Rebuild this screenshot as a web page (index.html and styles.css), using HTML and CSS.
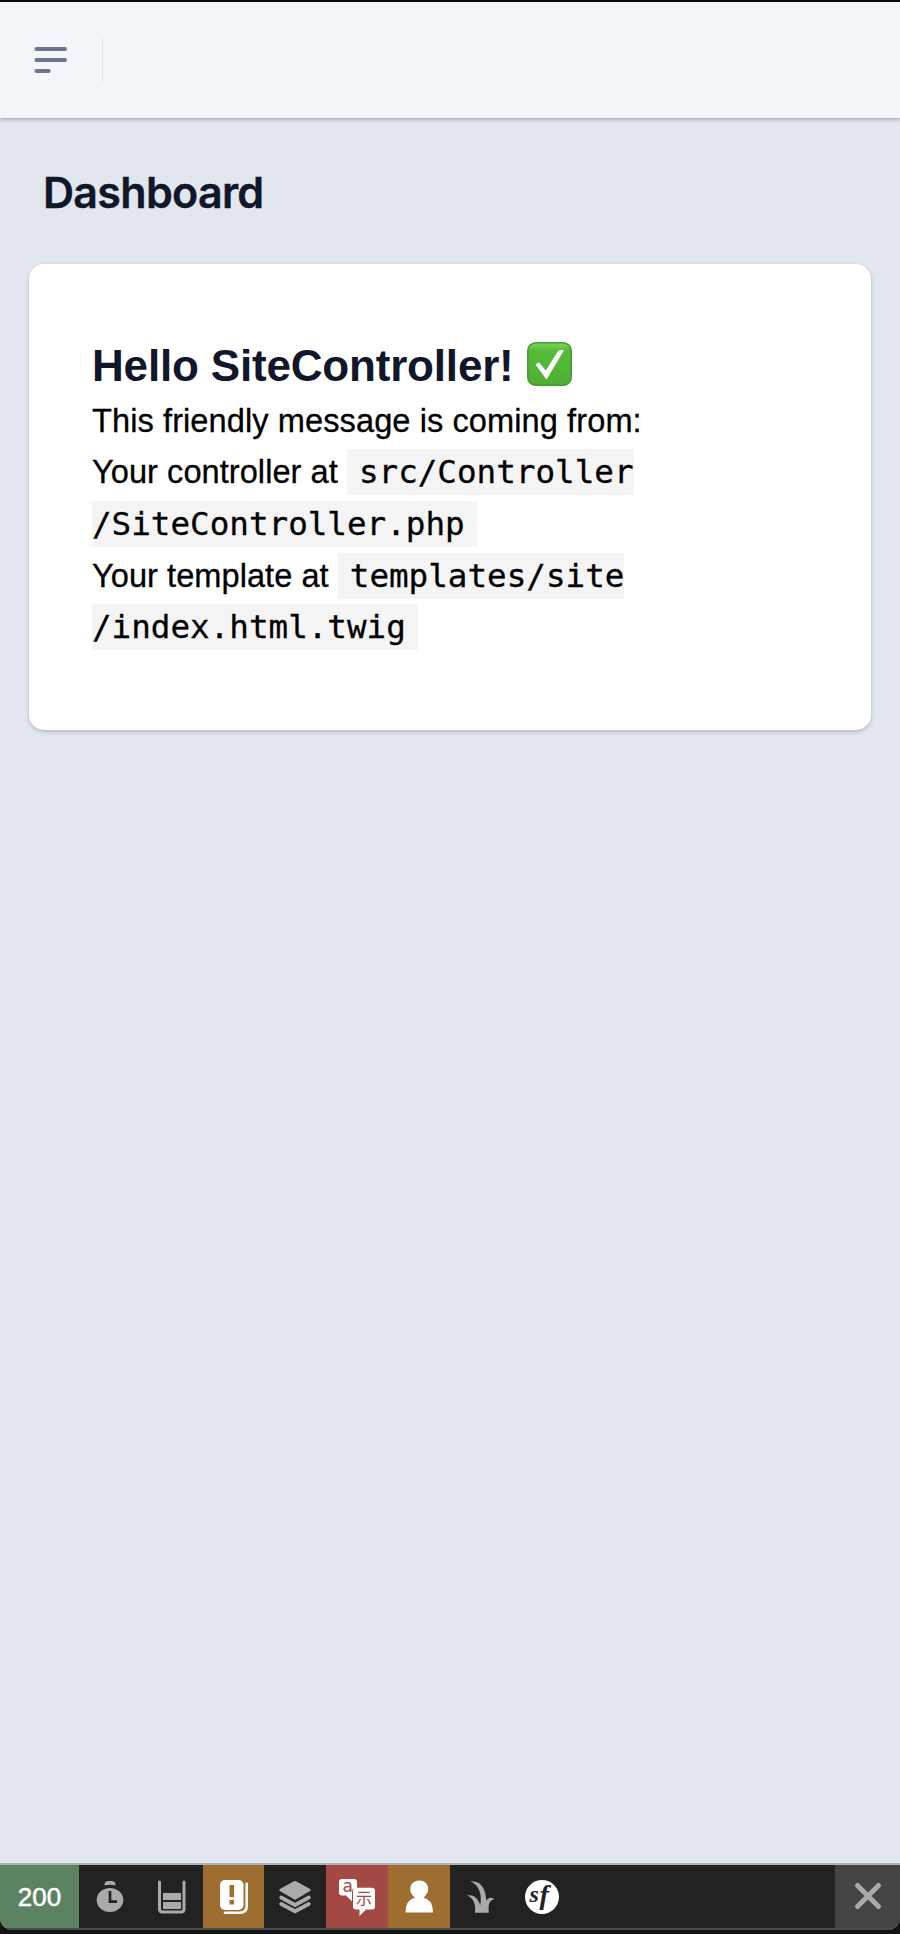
FILE: index.html
```
<!DOCTYPE html>
<html lang="en">
<head>
<meta charset="utf-8">
<title>Dashboard</title>
<link rel="stylesheet" href="styles.css">
</head>
<body>
<div class="app">
  <header class="topbar">
    <svg class="menu" width="34" height="28" viewBox="0 0 34 28"><path d="M2.500 3H31M2.500 14H31M2.500 25H14.700" stroke="#69768e" stroke-width="4" stroke-linecap="round"/></svg>
    <span class="divider"></span>
  </header>
  <main class="main">
    <h1 class="title">Dashboard</h1>
    <section class="card">
      <h2 class="hello"><span>Hello SiteController!</span>
        <svg class="check" width="45" height="44" viewBox="0 0 45 44"><defs><linearGradient id="g" x2="0" y2="1"><stop offset="0" stop-color="#7fd45c"/><stop offset=".18" stop-color="#55bd3a"/><stop offset="1" stop-color="#4fae34"/></linearGradient></defs><rect x=".8" y=".8" width="43.4" height="42.4" rx="8" fill="url(#g)" stroke="#459c31" stroke-width="1.6"/><path d="M8.500 22.500L12 20.300L18.800 28.600L31 9Q34 7.700 37 8.300L19.500 37.500Z" fill="#fff"/></svg>
      </h2>
      <p class="line msg">This friendly message is coming from:</p>
      <p class="line">Your controller at <code>src/Controller<br>/SiteController.php</code></p>
      <p class="line">Your template at <code>templates/site<br>/index.html.twig</code></p>
    </section>
  </main>
  <footer class="toolbar">
    <div class="status">200</div>
    <div class="item"><svg width="62" height="62" viewBox="0 0 62 62"><path d="M25.500 20.500v-1q0-3.500 4-3.500h3q4 0 4 3.500v1q-5.500-1.500-11 0Z" fill="#aaa"/><ellipse cx="31" cy="35" rx="13.3" ry="12" fill="#aaa"/><path d="M31 26v10.700h7" fill="none" stroke="#222" stroke-width="2.700"/></svg></div>
    <div class="item"><svg width="62" height="62" viewBox="0 0 62 62"><path d="M18.500 17V44q0 3 3 3H40q3 0 3-3V17" fill="none" stroke="#aaa" stroke-width="3" stroke-linecap="round"/><path d="M22 28H40V35H22ZM22 37H40V44H22Z" fill="#aaa"/></svg></div>
    <div class="item amber"><svg width="62" height="62" viewBox="0 0 62 62"><rect x="17" y="15" width="23.5" height="30" rx="5" fill="#fff"/><path d="M26.500 20h4.600v12h-4.600zM26.500 35h4.600v4.500h-4.600z" fill="#9e6e30"/><path d="M43.700 18.800V41q0 6.700-7 6.700H22" fill="none" stroke="#fff" stroke-width="2.600" stroke-linecap="round"/></svg></div>
    <div class="item"><svg width="62" height="62" viewBox="0 0 62 62"><path d="M31 17.200L45.500 25L31 33.500L16.500 25Z" fill="#aaa" stroke="#aaa" stroke-width="2.500" stroke-linejoin="round"/><path d="M17.200 32.500L31 40L44.800 32.500M17.200 39L31 46.300L44.800 39" fill="none" stroke="#aaa" stroke-width="3.800" stroke-linecap="round"/></svg></div>
    <div class="item red"><svg width="62" height="62" viewBox="0 0 62 62"><path d="M16 14H28q3 0 3 3v6h-1q-4 0-4 4v9.500L20 30.500H16q-3 0-3-3V17q0-3 3-3Z" fill="#fff"/><text x="16.500" y="26.800" class="latin">a</text><path d="M30 22.800H46q3 0 3 3V41.500q0 3-3 3H40l-6.500 6.500V44.500H30q-3 0-3-3V25.800q0-3 3-3Z" fill="#fff"/><text x="30" y="39.300" class="han">示</text></svg></div>
    <div class="item amber"><svg width="62" height="62" viewBox="0 0 62 62"><path d="M17.500 47.500Q17.500 35 27 32.500C19.500 27.500 21 15.500 31.300 15.500S43 27.500 35.500 32.500Q45 35 45 47.500Z" fill="#fff"/></svg></div>
    <div class="item"><svg width="62" height="62" viewBox="0 0 62 62"><path d="M25 47.800C26 38 23 33 17.300 30.500C23 29.500 27 32 30.300 40C32 31 30 20 20.300 16.200C32 15.500 36 25 36.200 36C38 33 41 31.500 44.500 34.500C39.500 35 38 39 38.800 47.800Z" fill="#aaa"/></svg></div>
    <div class="item"><svg width="62" height="62" viewBox="0 0 62 62"><circle cx="30" cy="32" r="17" fill="#fff"/><text x="17.500" y="36.500" class="sf">s</text><text x="27.500" y="38.500" class="sf f">f</text></svg></div>
    <div class="close"><svg width="30" height="30" viewBox="0 0 30 30"><path d="M4.500 4.500L25.500 25.500M25.500 4.500L4.500 25.500" stroke="#aaa" stroke-width="5" stroke-linecap="round"/></svg></div>
  </footer>
</div>
</body>
</html>
```
FILE: styles.css
```
* { box-sizing: border-box; }
body { margin: 0; background: #141414; }
.app { height: 1930px; display: flex; flex-direction: column; background: #e2e6ee; border-top: 2px solid #0b0908; border-radius: 0 0 12px 12px; overflow: hidden; box-shadow: 0 1px 1px #000; }
.topbar { flex: none; height: 116px; display: flex; align-items: center; padding-left: 34px; background: #f2f5fa; box-shadow: 0 2px 4px rgba(0,0,0,.22), 0 0 2px rgba(0,0,0,.15); }
.menu { display: block; }
.divider { width: 1px; height: 44px; margin-left: 34px; background: #e0e4eb; }
.main { flex: 1; padding: 48px 29px 0; }
.title { margin: 0; padding-left: 14px; height: 98px; font: 600 43px/52px Inter, sans-serif; letter-spacing: -.7px; -webkit-text-stroke: .4px #10172a; color: #10172a; white-space: nowrap; }
.card { height: 466px; padding: 76px 63px 0; background: #fff; border-radius: 15px; box-shadow: 0 2px 5px rgba(0,0,0,.13), 0 1px 3px rgba(0,0,0,.1); }
.hello { display: flex; align-items: center; gap: 13px; height: 52px; margin: 0 0 2.5px; font: bold 44px/52px "Liberation Sans", Arial, sans-serif; letter-spacing: -.18px; color: #10172a; white-space: nowrap; }
.check { display: block; flex: none; margin-bottom: 4px; }
.line { margin: 0; font: 32.6px/51.7px "Liberation Sans", Arial, sans-serif; letter-spacing: .04px; -webkit-text-stroke: .3px #000; color: #000; white-space: nowrap; }
.msg { letter-spacing: .08px; }
.line code { padding: 4px 12px; background: #f4f4f4; font: 32.6px "DejaVu Sans Mono", monospace; letter-spacing: 0; }
.toolbar { flex: none; height: 67px; display: flex; background: #222; border-top: 2px solid #afb2b7; border-bottom: 2px solid #4b4b4b; }
.status { width: 79px; background: #5b8261; color: #fff; font: 26px/64px "Liberation Sans", Arial, sans-serif; text-align: center; -webkit-text-stroke: .5px #fff; }
.item { width: 61.8px; }
.item svg { display: block; }
.amber { background: #9e6e30; }
.red { background: #a34943; }
.close { width: 65px; margin-left: auto; display: flex; align-items: center; justify-content: center; background: #444; }
.close svg { margin-bottom: 2px; }
.latin { font: 17px "DejaVu Sans", sans-serif; fill: #a34943; }
.han { font: 16px "Noto Sans CJK SC", sans-serif; fill: #a34943; }
.sf { font: italic bold 24px "Liberation Serif", serif; fill: #222; }
.sf.f { font-size: 28px; }
```
